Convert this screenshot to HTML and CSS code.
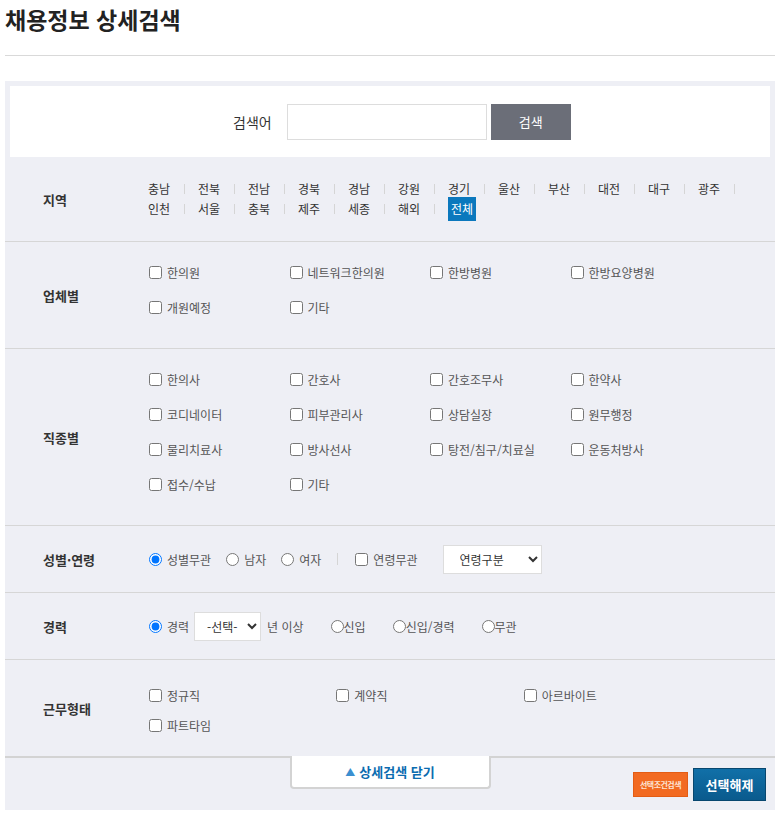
FILE: index.html
```html
<!DOCTYPE html>
<html lang="ko">
<head>
  <meta charset="UTF-8">
  <meta name="viewport" content="width=device-width, initial-scale=1.0">
  <title>채용정보 상세검색</title>
  <link rel="stylesheet" href="styles.css">
</head>
<body>
  <h1 class="page-title">채용정보 상세검색</h1>

  <div class="search-panel">
    <div class="keyword-box">
      <label for="keyword">검색어</label>
      <input type="text" id="keyword">
      <button class="btn-search">검색</button>
    </div>

    <div class="cond-row">
      <div class="cond-label">지역</div>
      <ul class="area-list">
        <li><a>충남</a></li>
        <li><a>전북</a></li>
        <li><a>전남</a></li>
        <li><a>경북</a></li>
        <li><a>경남</a></li>
        <li><a>강원</a></li>
        <li><a>경기</a></li>
        <li><a>울산</a></li>
        <li><a>부산</a></li>
        <li><a>대전</a></li>
        <li><a>대구</a></li>
        <li><a>광주</a></li>
        <li><a>인천</a></li>
        <li><a>서울</a></li>
        <li><a>충북</a></li>
        <li><a>제주</a></li>
        <li><a>세종</a></li>
        <li><a>해외</a></li>
        <li><a class="on">전체</a></li>
      </ul>
    </div>

    <div class="cond-row">
      <div class="cond-label">업체별</div>
      <ul class="check-list">
        <li><label><input type="checkbox">한의원</label></li>
        <li><label><input type="checkbox">네트워크한의원</label></li>
        <li><label><input type="checkbox">한방병원</label></li>
        <li><label><input type="checkbox">한방요양병원</label></li>
        <li><label><input type="checkbox">개원예정</label></li>
        <li><label><input type="checkbox">기타</label></li>
      </ul>
    </div>

    <div class="cond-row">
      <div class="cond-label">직종별</div>
      <ul class="check-list">
        <li><label><input type="checkbox">한의사</label></li>
        <li><label><input type="checkbox">간호사</label></li>
        <li><label><input type="checkbox">간호조무사</label></li>
        <li><label><input type="checkbox">한약사</label></li>
        <li><label><input type="checkbox">코디네이터</label></li>
        <li><label><input type="checkbox">피부관리사</label></li>
        <li><label><input type="checkbox">상담실장</label></li>
        <li><label><input type="checkbox">원무행정</label></li>
        <li><label><input type="checkbox">물리치료사</label></li>
        <li><label><input type="checkbox">방사선사</label></li>
        <li><label><input type="checkbox">탕전/침구/치료실</label></li>
        <li><label><input type="checkbox">운동처방사</label></li>
        <li><label><input type="checkbox">접수/수납</label></li>
        <li><label><input type="checkbox">기타</label></li>
      </ul>
    </div>

    <div class="cond-row">
      <div class="cond-label">성별·연령</div>
      <div class="opt-line">
        <label><input type="radio" name="gender" checked>성별무관</label>
        <label><input type="radio" name="gender">남자</label>
        <label><input type="radio" name="gender">여자</label>
        <span class="bar"></span>
        <label><input type="checkbox">연령무관</label>
        <select class="sel-age">
          <option>연령구분</option>
        </select>
      </div>
    </div>

    <div class="cond-row">
      <div class="cond-label">경력</div>
      <div class="opt-line career">
        <label><input type="radio" name="career" checked>경력</label>
        <select class="sel-year">
          <option>-선택-</option>
        </select>
        <span class="unit">년 이상</span>
        <label class="tight"><input type="radio" name="career">신입</label>
        <label class="tight"><input type="radio" name="career">신입/경력</label>
        <label class="tight"><input type="radio" name="career">무관</label>
      </div>
    </div>

    <div class="cond-row last">
      <div class="cond-label">근무형태</div>
      <ul class="check-list cols3">
        <li><label><input type="checkbox">정규직</label></li>
        <li><label><input type="checkbox">계약직</label></li>
        <li><label><input type="checkbox">아르바이트</label></li>
        <li><label><input type="checkbox">파트타임</label></li>
      </ul>
    </div>

    <div class="panel-foot">
      <a class="btn-fold" href="#"><span class="arrow">▲</span> 상세검색 닫기</a>
      <div class="foot-btns">
        <button class="btn-cond">선택조건검색</button>
        <button class="btn-reset">선택해제</button>
      </div>
    </div>
  </div>
</body>
</html>
```

FILE: styles.css
```css
body { margin: 0; padding: 0 5px; font-family: "Noto Sans CJK KR", "Noto Sans", sans-serif; font-size: 12px; color: #555; background: #fff; }
ul { list-style: none; margin: 0; padding: 0; }
a { text-decoration: none; }
button, select, input { font-family: inherit; }

.page-title { margin: 0; padding: 4px 0 21px; font-size: 23px; line-height: 30px; color: #222; border-bottom: 1px solid #d9d9d9; }

.search-panel { margin-top: 25px; padding-top: 5px; background: #eeeff5; }

.keyword-box { display: flex; align-items: center; height: 71px; margin: 0 5px; padding-left: 223px; background: #fff; }
.keyword-box label { margin-right: 15px; font-size: 14px; color: #333; }
.keyword-box input { box-sizing: border-box; width: 200px; height: 36px; margin: 0; padding: 0 8px; border: 1px solid #ddd; }
.btn-search { width: 80px; height: 36px; margin-left: 4px; border: 0; background: #6b6e78; color: #fff; font-size: 13px; }

.cond-row { display: grid; grid-template-columns: 143px 1fr; border-bottom: 1px solid #d6d6d6; }
.cond-row.last { border-bottom: 0; }
.cond-label { display: flex; align-items: center; padding-left: 38px; font-size: 13px; font-weight: bold; color: #333; }

.area-list { display: flex; flex-wrap: wrap; width: 610px; padding: 22px 0; line-height: 20px; }
.area-list li { display: flex; align-items: center; width: 50px; }
.area-list li::after { content: ""; width: 1px; height: 10px; background: #d5d5d5; }
.area-list li:last-child::after { display: none; }
.area-list a { width: 36px; color: #333; }
.area-list a.on { width: auto; margin: -2px 0; padding: 0 3px; line-height: 24px; background: #0b78bd; color: #fff; }

.check-list { display: flex; flex-wrap: wrap; width: 562px; padding: 13px 0 23px; }
.check-list li { display: flex; align-items: center; width: 25%; height: 35px; }
.check-list.cols3 { padding: 20px 0 16px; }
.check-list.cols3 li { width: 33.333%; height: 30px; }
.check-list label { display: flex; align-items: center; }

input[type=checkbox], input[type=radio] { margin: 0 5px 0 1px; }

.opt-line { display: flex; align-items: center; height: 66px; }
.opt-line label { display: flex; align-items: center; margin-right: 14px; }
.opt-line .bar { width: 1px; height: 12px; margin: 0 16px 0 2px; background: #d5d5d5; }
.opt-line select { box-sizing: border-box; height: 29px; padding: 0 0 0 12px; border: 1px solid #ddd; border-radius: 0; background: #fff; color: #333; font-size: 12px; }
.sel-age { width: 99px; margin-left: 11px; }
.sel-year { width: 67px; }
.opt-line .sel-year { padding-left: 8px; }
.career label { margin-right: 5px; }
.career .unit { margin-left: 6px; }
.career .tight { margin: 0 0 0 26px; }
.career .tight input { margin: 0 0 0 1px; }

.panel-foot { display: grid; grid-template-columns: 1fr 201px 1fr; height: 52px; border-top: 2px solid #d3d3d3; }
.btn-fold { grid-column: 2; display: flex; align-items: center; justify-content: center; height: 31px; margin-top: -2px; border: 2px solid #d3d3d3; border-top: 0; border-radius: 0 0 4px 4px; background: #fff; color: #0b6cb0; font-size: 13px; font-weight: bold; }
.btn-fold .arrow { margin-right: 4px; color: #3b8fd0; font-size: 10px; }
.foot-btns { display: flex; align-items: center; justify-content: flex-end; gap: 5px; padding-right: 9px; }
.btn-cond { box-sizing: border-box; width: 55px; height: 25px; padding: 0; border: 1px solid #e35c14; background: #f26a21; color: #fde3d3; font-size: 8px; font-weight: bold; letter-spacing: -0.5px; }
.btn-reset { box-sizing: border-box; width: 73px; height: 33px; padding: 0; border: 1px solid #08476f; background: linear-gradient(#1170a8, #0a5a8d); color: #fff; font-size: 13px; font-weight: bold; }
```
